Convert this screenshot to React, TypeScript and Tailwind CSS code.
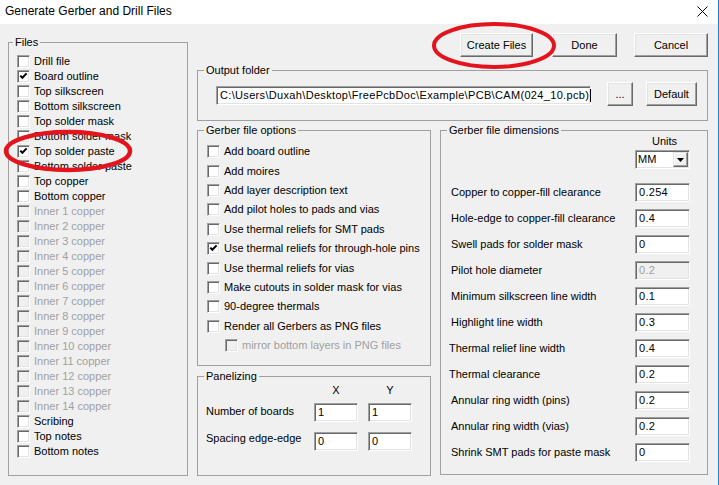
import type { ReactNode } from "react";

const FILES: [string, number][] = [
  ["Drill file", 0],
  ["Board outline", 1],
  ["Top silkscreen", 0],
  ["Bottom silkscreen", 0],
  ["Top solder mask", 0],
  ["Bottom solder mask", 0],
  ["Top solder paste", 1],
  ["Bottom solder paste", 0],
  ["Top copper", 0],
  ["Bottom copper", 0],
  ["Inner 1 copper", 2],
  ["Inner 2 copper", 2],
  ["Inner 3 copper", 2],
  ["Inner 4 copper", 2],
  ["Inner 5 copper", 2],
  ["Inner 6 copper", 2],
  ["Inner 7 copper", 2],
  ["Inner 8 copper", 2],
  ["Inner 9 copper", 2],
  ["Inner 10 copper", 2],
  ["Inner 11 copper", 2],
  ["Inner 12 copper", 2],
  ["Inner 13 copper", 2],
  ["Inner 14 copper", 2],
  ["Scribing", 0],
  ["Top notes", 0],
  ["Bottom notes", 0],
];

const OPTIONS: [string, number][] = [
  ["Add board outline", 0],
  ["Add moires", 0],
  ["Add layer description text", 0],
  ["Add pilot holes to pads and vias", 0],
  ["Use thermal reliefs for SMT pads", 0],
  ["Use thermal reliefs for through-hole pins", 1],
  ["Use thermal reliefs for vias", 0],
  ["Make cutouts in solder mask for vias", 0],
  ["90-degree thermals", 0],
  ["Render all Gerbers as PNG files", 0],
];

const DIMS: [string, string, boolean?, string?][] = [
  ["Copper to copper-fill clearance", "0.254"],
  ["Hole-edge to copper-fill clearance", "0.4"],
  ["Swell pads for solder mask", "0"],
  ["Pilot hole diameter", "0.2", true],
  ["Minimum silkscreen line width", "0.1"],
  ["Highlight line width", "0.3"],
  ["Thermal relief line width", "0.4", false, "-ml-[2px]"],
  ["Thermal clearance", "0.2", false, "-ml-[2px]"],
  ["Annular ring width (pins)", "0.2"],
  ["Annular ring width (vias)", "0.2"],
  ["Shrink SMT pads for paste mask", "0"],
];

function Check({ state }: { state: number }) {
  const off = state === 2;
  return (
    <span
      className={`relative h-[13px] w-[13px] shrink-0 border border-t-[#a0a0a0] border-l-[#a0a0a0] border-r-white border-b-white shadow-[inset_1px_1px_#696969,inset_-1px_-1px_#e3e3e3] ${
        off ? "bg-[#f0f0f0]" : "bg-white"
      }`}
    >
      {state === 1 && (
        <svg className="absolute left-0 top-0" width="11" height="11" viewBox="0 0 11 11">
          <path d="M2.3 4.6 L4.4 6.8 L8.6 2.4" stroke="black" strokeWidth="2" fill="none" />
        </svg>
      )}
    </span>
  );
}

function Btn({ children, className = "" }: { children: ReactNode; className?: string }) {
  return (
    <div
      className={`flex h-[24px] shrink-0 items-center justify-center border border-t-white border-l-white border-r-[#696969] border-b-[#696969] bg-[#f0f0f0] shadow-[inset_-1px_-1px_#a0a0a0,inset_1px_1px_#e3e3e3] ${className}`}
    >
      {children}
    </div>
  );
}

function Field({ value, off, className = "" }: { value: ReactNode; off?: boolean; className?: string }) {
  return (
    <div
      className={`flex h-[19px] shrink-0 items-center border border-t-[#a0a0a0] border-l-[#a0a0a0] border-r-white border-b-white px-[3px] tracking-[0.3px] shadow-[inset_1px_1px_#696969,inset_-1px_-1px_#e3e3e3] ${
        off ? "bg-[#f0f0f0] text-[#a0a0a0]" : "bg-white"
      } ${className}`}
    >
      {value}
    </div>
  );
}

function Group({ title, className, children, lm = "ml-[6px]" }: { title: string; className: string; children: ReactNode; lm?: string }) {
  return (
    <fieldset className={`m-0 min-w-0 shrink-0 border border-[#a0a0a0] p-0 ${className}`}>
      <legend className={`${lm} px-[2px] leading-[13px]`}>{title}</legend>
      {children}
    </fieldset>
  );
}

export default function App() {
  return (
    <div className="relative h-[485px] w-[719px] overflow-hidden border-r border-[#1883d7] bg-[#f0f0f0] font-['Liberation_Sans',Arial,sans-serif] text-[11px] leading-[13px] text-black">
      <div className="flex h-[24px] items-center justify-between bg-white pb-[1px] pl-[5px] pr-[10px]">
        <span className="text-[12px]">Generate Gerber and Drill Files</span>
        <svg width="11" height="11" viewBox="0 0 11 11">
          <path d="M0.5 0.5 L10.5 10.5 M10.5 0.5 L0.5 10.5" stroke="black" strokeWidth="1" />
        </svg>
      </div>

      <div className="flex pl-[8px]">
        <Group title="Files" className="mt-[12px] h-[440px] w-[180px]" lm="ml-[4px]">
          <div className="flex flex-col pl-[8px] pt-[5px]">
            {FILES.map(([name, st]) => (
              <div key={name} className="flex h-[15px] items-center gap-[4px]">
                <Check state={st} />
                <span className={st === 2 ? "text-[#a0a0a0]" : ""}>{name}</span>
              </div>
            ))}
          </div>
        </Group>

        <div className="ml-[9px] flex w-[511px] flex-col">
          <div className="mt-[9px] flex justify-end">
            <Btn className="w-[73px]">Create Files</Btn>
            <Btn className="ml-[19px] w-[65px]">Done</Btn>
            <Btn className="ml-[17px] w-[74px]">Cancel</Btn>
          </div>

          <Group title="Output folder" className="mt-[7px] h-[57px] w-[511px]">
            <div className="flex items-start pl-[18px] pt-[5px]">
              <Field
                className="mt-[4px] w-[375px] tracking-[0.33px]"
                value={
                  <span className="flex items-center">
                    C:\Users\Duxah\Desktop\FreePcbDoc\Example\PCB\CAM(024_10.pcb)
                    <span className="ml-[1px] h-[13px] w-[1px] bg-black" />
                  </span>
                }
              />
              <Btn className="ml-[16px] w-[26px]">...</Btn>
              <Btn className="ml-[13px] w-[51px]">Default</Btn>
            </div>
          </Group>

          <div className="mt-[3px] flex">
            <div className="flex w-[234px] flex-col">
              <Group title="Gerber file options" className="h-[242px] w-[234px]">
                <div className="flex flex-col pl-[9px] pt-[5px]">
                  {OPTIONS.map(([name, st]) => (
                    <div key={name} className="flex h-[19.4px] items-center gap-[4px]">
                      <Check state={st} />
                      <span>{name}</span>
                    </div>
                  ))}
                  <div className="flex h-[19.4px] items-center gap-[4px] pl-[18px]">
                    <Check state={2} />
                    <span className="text-[#a0a0a0]">mirror bottom layers in PNG files</span>
                  </div>
                </div>
              </Group>

              <Group title="Panelizing" className="mt-[4px] h-[106px] w-[234px]">
                <div className="flex flex-col pl-[8px] pt-[1px]">
                  <div className="flex h-[14px]">
                    <span className="w-[108px]" />
                    <span className="w-[44px] text-center">X</span>
                    <span className="ml-[10px] w-[44px] text-center">Y</span>
                  </div>
                  <div className="mt-[5px] flex items-start">
                    <span className="mt-[2px] w-[108px]">Number of boards</span>
                    <Field className="w-[44px]" value="1" />
                    <Field className="ml-[10px] w-[44px]" value="1" />
                  </div>
                  <div className="mt-[10px] flex items-start">
                    <span className="w-[108px]">Spacing edge-edge</span>
                    <Field className="w-[44px]" value="0" />
                    <Field className="ml-[10px] w-[44px]" value="0" />
                  </div>
                </div>
              </Group>
            </div>

            <Group title="Gerber file dimensions" className="ml-[9px] h-[351px] w-[268px]">
              <div className="flex flex-col pl-[10px]">
                <div className="-mt-[2px] ml-[186px] w-[55px] text-center">Units</div>
                <div className="ml-[184px] mt-[2px] flex h-[19px] w-[55px] items-center justify-between border border-t-[#a0a0a0] border-l-[#a0a0a0] border-r-white border-b-white bg-white pl-[2px] pr-[1px] shadow-[inset_1px_1px_#696969,inset_-1px_-1px_#e3e3e3]">
                  <span>MM</span>
                  <div className="flex h-[15px] w-[15px] items-center justify-center border border-t-[#e3e3e3] border-l-[#e3e3e3] border-r-[#696969] border-b-[#696969] bg-[#f0f0f0] shadow-[inset_-1px_-1px_#a0a0a0,inset_1px_1px_white]">
                    <svg width="7" height="4" viewBox="0 0 7 4">
                      <path d="M0 0 H7 L3.5 4 Z" fill="black" />
                    </svg>
                  </div>
                </div>
                <div className="mt-[14px] flex flex-col gap-[7px]">
                  {DIMS.map(([label, val, off, adj]) => (
                    <div key={label} className="flex h-[19px] items-center">
                      <span className={`w-[184px] ${adj ?? ""}`}>{label}</span>
                      <Field className={`w-[55px] ${adj ? "ml-[2px]" : ""}`} value={val} off={off} />
                    </div>
                  ))}
                </div>
              </div>
            </Group>
          </div>
        </div>
      </div>

      <svg className="pointer-events-none absolute left-0 top-0" width="719" height="485">
        <ellipse cx="494" cy="45.5" rx="60" ry="21.5" stroke="#e3141d" strokeWidth="4" fill="none" />
        <ellipse cx="68" cy="151" rx="62" ry="19" stroke="#e3141d" strokeWidth="4.5" fill="none" />
      </svg>
    </div>
  );
}
